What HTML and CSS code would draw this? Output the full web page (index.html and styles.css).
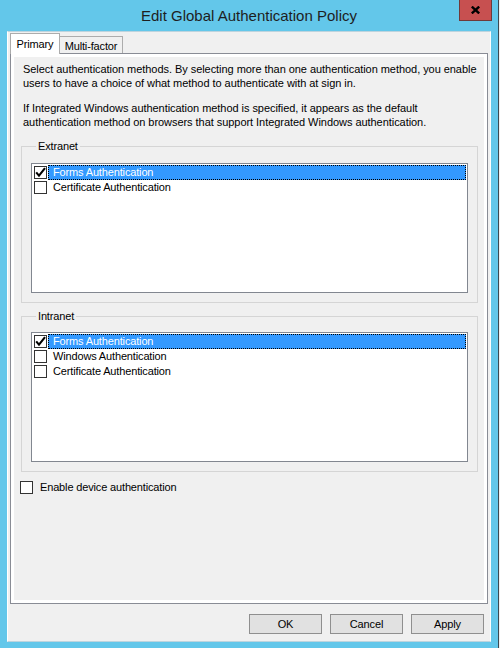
FILE: index.html
```html
<!DOCTYPE html>
<html lang="en">

<head>
    <meta charset="UTF-8">
    <meta name="viewport" content="width=device-width, initial-scale=1.0">
    <title>Edit Global Authentication Policy</title>
    <link rel="stylesheet" href="styles.css">
</head>

<body>
    <div class="window">
        <!-- Title bar -->
        <div class="titlebar">
            <h1 class="title">Edit Global Authentication Policy</h1>
            <button class="close" title="Close">
                <svg width="9" height="8" viewBox="0 0 9 8">
                    <path d="M0.8 0.6 L8.2 7.4 M8.2 0.6 L0.8 7.4" stroke="#000" stroke-width="2.4" fill="none" />
                </svg>
            </button>
        </div>

        <div class="client">
            <div class="tabs">
                <div class="tab active">Primary</div>
                <div class="tab">Multi-factor</div>
            </div>

            <!-- Primary tab page -->
            <section class="panel">
                <p class="intro">Select authentication methods. By selecting more than one authentication method, you enable<br>users to have a choice of what method to authenticate with at sign in.</p>
                <p class="intro">If Integrated Windows authentication method is specified, it appears as the default<br>authentication method on browsers that support Integrated Windows authentication.</p>

                <fieldset class="group">
                    <legend>Extranet</legend>
                    <div class="list">
                        <div class="item">
                            <span class="check"><svg width="11" height="11" viewBox="0 0 11 11"><path d="M1.2 5.4 L4 8.6 L10 1.2" stroke="#000" stroke-width="2.1" fill="none" /></svg></span>
                            <span class="label selected">Forms Authentication</span>
                        </div>
                        <div class="item">
                            <span class="check"></span>
                            <span class="label">Certificate Authentication</span>
                        </div>
                    </div>
                </fieldset>

                <fieldset class="group">
                    <legend>Intranet</legend>
                    <div class="list">
                        <div class="item">
                            <span class="check"><svg width="11" height="11" viewBox="0 0 11 11"><path d="M1.2 5.4 L4 8.6 L10 1.2" stroke="#000" stroke-width="2.1" fill="none" /></svg></span>
                            <span class="label selected">Forms Authentication</span>
                        </div>
                        <div class="item">
                            <span class="check"></span>
                            <span class="label">Windows Authentication</span>
                        </div>
                        <div class="item">
                            <span class="check"></span>
                            <span class="label">Certificate Authentication</span>
                        </div>
                    </div>
                </fieldset>

                <label class="option"><span class="check"></span>Enable device authentication</label>
            </section>

            <div class="buttons">
                <button>OK</button>
                <button>Cancel</button>
                <button>Apply</button>
            </div>
        </div>
    </div>
</body>

</html>
```

FILE: styles.css
```css
/* Basic Styles */
body {
    margin: 0;
    background-color: #f0f0f0;
    font-family: "Liberation Sans", Arial, sans-serif;
    font-size: 11px;
    color: #000;
}

.window {
    width: 498px;
    height: 648px;
    background-color: #63c7ea;
    border-right: 1px solid #3b4a52;
}

/* Title bar */
.titlebar {
    height: 31px;
    display: grid;
    grid-template-columns: 1fr auto 1fr;
}

.title {
    grid-column: 2;
    margin: 0;
    font-size: 15px;
    font-weight: normal;
    line-height: 31px;
    color: #1e1e1e;
}

.close {
    grid-column: 3;
    justify-self: end;
    align-self: start;
    width: 33px;
    height: 21px;
    margin-right: 6px;
    padding: 0;
    background-color: #c75050;
    border: 1px solid #6f3a3a;
    border-top: none;
    display: flex;
    align-items: center;
    justify-content: center;
}

/* Client area */
.client {
    margin-left: 7px;
    width: 484px;
    height: 611px;
    box-sizing: border-box;
    background-color: #f0f0f0;
    border: 1px solid;
    border-color: #bdd4de #fff #bdd4de #fff;
    padding: 1px 2px 7px;
}

.tabs {
    display: flex;
    align-items: flex-end;
    height: 21px;
    position: relative;
    z-index: 1;
}

.tab {
    box-sizing: border-box;
    width: 64px;
    height: 17px;
    margin-left: -1px;
    margin-bottom: 1px;
    padding-top: 2px;
    border: 1px solid #acacac;
    border-bottom: none;
    background-color: #f0f0f0;
    text-align: center;
    line-height: 14px;
    letter-spacing: -0.15px;
}

.tab.active {
    width: 50px;
    height: 21px;
    margin-left: 0;
    margin-bottom: 0;
    padding-top: 3px;
    background-color: #fff;
}

.panel {
    margin-top: -1px;
    height: 551px;
    box-sizing: border-box;
    border: 1px solid #898c95;
    background-color: #f0f0f0;
    box-shadow: inset 0 0 0 3px #fff;
    padding: 8px 9px 0 10px;
}

.intro {
    margin: 0;
    padding-left: 2px;
    line-height: 14px;
    white-space: nowrap;
    letter-spacing: -0.05px;
}

.intro + .intro {
    margin-top: 11px;
}

/* Group boxes */
.group {
    margin: 10px 0 0;
    padding: 10px 9px 9px;
    border: 1px solid #d5d5d5;
    min-width: 0;
}

.group + .group {
    margin-top: 6px;
    padding-top: 9px;
}

.group legend {
    margin-left: 5px;
    padding: 0 2px;
    line-height: 14px;
    letter-spacing: -0.15px;
}

.list {
    height: 130px;
    box-sizing: border-box;
    background-color: #fff;
    border: 1px solid #828790;
    padding: 1px;
}

.item {
    display: flex;
    align-items: center;
    height: 15px;
}

.check {
    flex: none;
    width: 13px;
    height: 13px;
    box-sizing: border-box;
    margin-left: 1px;
    border: 1px solid #333;
    background-color: #fff;
    display: flex;
}

.label {
    flex: 1;
    height: 15px;
    margin-left: 1px;
    box-sizing: border-box;
    padding-left: 4px;
    border: 1px solid transparent;
    line-height: 13px;
    letter-spacing: -0.15px;
    white-space: nowrap;
}

.label.selected {
    background-color: #3399ff;
    color: #fff;
    border: 1px dotted #000;
}

.option {
    display: flex;
    align-items: center;
    gap: 7px;
    height: 14px;
    margin: 8px 0 0 -2px;
    line-height: 14px;
    letter-spacing: -0.15px;
}

/* Dialog buttons */
.buttons {
    display: flex;
    justify-content: flex-end;
    gap: 8px;
    margin-top: 10px;
    padding-right: 4px;
}

.buttons button {
    width: 73px;
    height: 20px;
    padding: 0;
    border: 1px solid #8f8f8f;
    background-color: #e1e1e1;
    font-family: inherit;
    font-size: 11px;
    letter-spacing: -0.15px;
    color: #000;
}
```
